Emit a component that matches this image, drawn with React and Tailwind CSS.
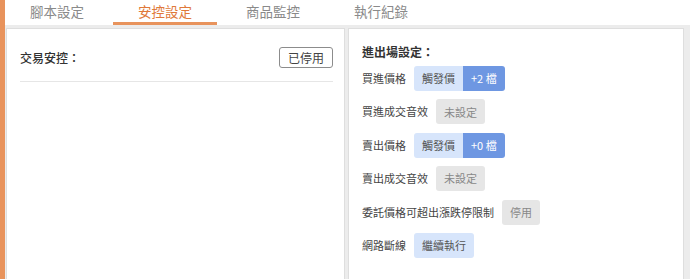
import React from "react";

const font = { fontFamily: '"Noto Sans CJK TC", "Noto Sans", sans-serif' };

function Row({ label, children }) {
  return (
    <div className="flex items-center h-[25px] gap-[8px]">
      <span className="text-[11px] text-[#444] leading-none">{label}</span>
      {children}
    </div>
  );
}

function Seg({ a, b }) {
  return (
    <div className="flex h-[25px] rounded-[3px] overflow-hidden text-[11px]">
      <span className="flex items-center px-[8px] bg-[#d7e5fb] text-[#555]">{a}</span>
      <span className="flex items-center px-[8px] bg-[#6e97e2] text-white">{b}</span>
    </div>
  );
}

function Gray({ t }) {
  return (
    <span className="flex items-center h-[25px] px-[8px] rounded-[3px] bg-[#e6e6e6] text-[11px] text-[#888]">{t}</span>
  );
}

export default function App() {
  const tabs = ["腳本設定", "安控設定", "商品監控", "執行紀錄"];
  return (
    <div style={font} className="w-[690px] h-[279px] flex bg-white overflow-hidden">
      <div className="w-[5px] bg-[#e8935c] shrink-0" />
      <div className="flex-1 flex flex-col">
        <div className="h-[25px] flex gap-[4px] bg-white">
          {tabs.map((t, i) => (
            <div
              key={t}
              className={
                "w-[104px] flex items-center justify-center text-[13.5px] " +
                (i === 1
                  ? "text-[#e0793a] border-b-[3px] border-[#e8935c] pt-[1px]"
                  : "text-[#8a8a8a] pb-[2px]")
              }
            >
              {t}
            </div>
          ))}
        </div>
        <div className="flex-1 flex gap-[3px] bg-[#ececec] pt-[3px] pl-[1px]">
          <div className="w-[339px] shrink-0 bg-white border-l border-t border-r border-[#dedede] pl-[13px] pr-[11px] pt-[18px]">
            <div className="flex items-center justify-between h-[21px]">
              <span className="text-[12px] text-[#333] font-medium">交易安控：</span>
              <span className="flex items-center h-[21px] px-[8px] border border-[#8c8c8c] rounded-[3px] text-[12px] text-[#444]">已停用</span>
            </div>
            <div className="mt-[13px] border-t border-[#e6e6e6]" />
          </div>
          <div className="w-[336px] shrink-0 bg-white border-l border-t border-r border-[#dedede] pl-[13px] pt-[14px]">
            <div className="h-[18px] flex items-center text-[12px] font-bold text-[#333]">進出場設定：</div>
            <div className="mt-[5px] flex flex-col gap-[8.4px]">
              <Row label="買進價格"><Seg a="觸發價" b="+2 檔" /></Row>
              <Row label="買進成交音效"><Gray t="未設定" /></Row>
              <Row label="賣出價格"><Seg a="觸發價" b="+0 檔" /></Row>
              <Row label="賣出成交音效"><Gray t="未設定" /></Row>
              <Row label="委託價格可超出漲跌停限制"><Gray t="停用" /></Row>
              <Row label="網路斷線">
                <span className="flex items-center h-[25px] px-[8px] rounded-[3px] bg-[#d7e5fb] text-[11px] text-[#555]">繼續執行</span>
              </Row>
            </div>
          </div>
        </div>
      </div>
    </div>
  );
}
